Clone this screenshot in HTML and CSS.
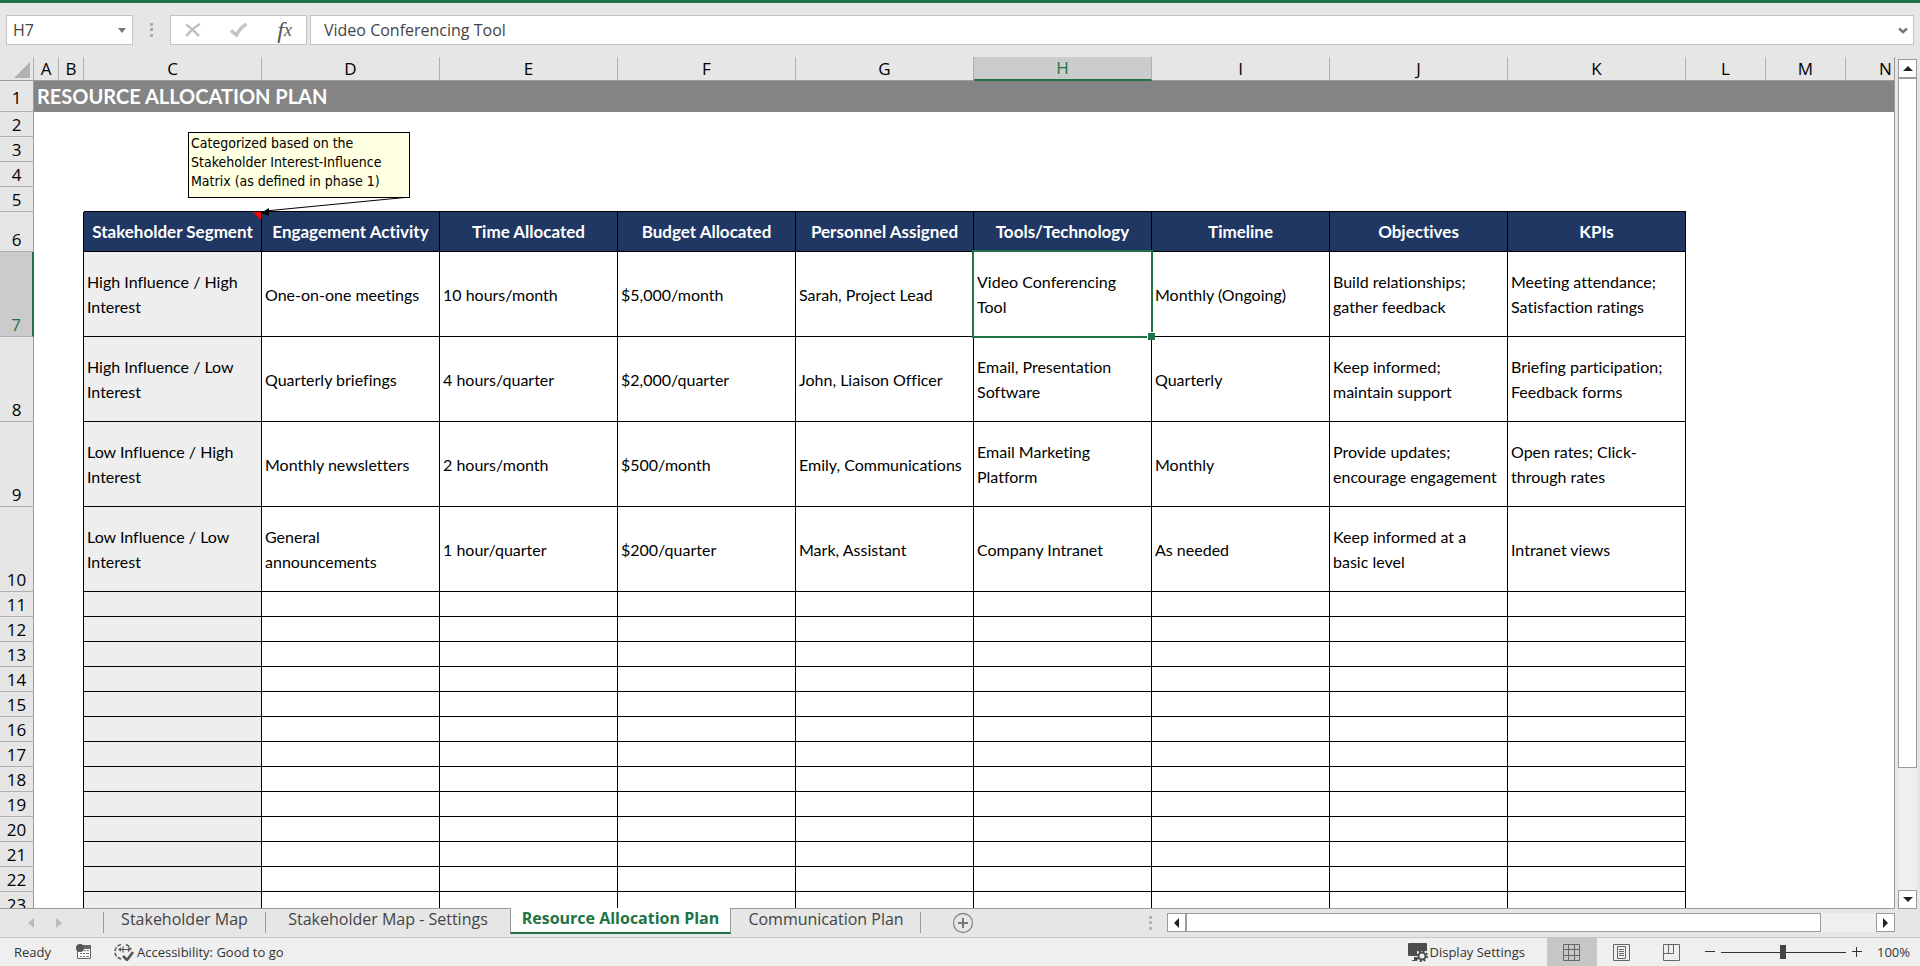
FILE: index.html
```html
<!DOCTYPE html>
<html lang="en">
<head>
<meta charset="utf-8">
<title>Resource Allocation Plan</title>
<link rel="stylesheet" href="styles.css">
</head>
<body>
<div class="app">
  <header class="formula-bar">
    <div class="name-box">
      <input class="name-input" type="text" value="H7" aria-label="Name box">
      <button class="plain" type="button" aria-label="Open name list"><svg width="8" height="5" viewBox="0 0 8 5"><path d="M0 0h8L4 5z" fill="#777"/></svg></button>
    </div>
    <svg class="grip" width="3" height="14" viewBox="0 0 3 14"><path d="M0 0h3v3H0zM0 5h3v3H0zM0 11h3v3H0z" fill="#aaa"/></svg>
    <div class="formula-tools">
      <button class="plain" type="button" aria-label="Cancel"><svg width="16" height="14" viewBox="0 0 16 14"><path d="M1 1.500C5 4 10 9 14 13M15 1C10 4 5 8 1.500 13" fill="none" stroke="#c0c0c0" stroke-width="2.500"/></svg></button>
      <button class="plain" type="button" aria-label="Enter"><svg width="18" height="14" viewBox="0 0 18 14"><path d="M1 7.500l5.500 4.500Q10 5 16.500 1" fill="none" stroke="#c4c4c4" stroke-width="3.500"/></svg></button>
      <button class="plain fx" type="button" aria-label="Insert function"><i>f</i><i class="fx-x">x</i></button>
    </div>
    <div class="formula-field">
      <input class="formula-input" type="text" value="Video Conferencing Tool" aria-label="Formula">
      <button class="plain" type="button" aria-label="Expand formula bar"><svg width="10" height="7" viewBox="0 0 10 7"><path d="M1 1.500l4 3.500 4-3.500" fill="none" stroke="#777" stroke-width="2.500"/></svg></button>
    </div>
  </header>

  <main class="workspace">
    <div class="sheet">
      <table class="grid">
        <colgroup><col class="w-head"><col class="w-narrow"><col class="w-narrow"><col class="w-data"><col class="w-data"><col class="w-data"><col class="w-data"><col class="w-data"><col class="w-data"><col class="w-data"><col class="w-data"><col class="w-data"><col class="w-default"><col class="w-default"><col></colgroup>
        <thead>
          <tr class="letters"><th class="corner"><svg width="16" height="16" viewBox="0 0 16 16"><path d="M16 0v16H0z" fill="#b2b2b2"/></svg></th><th>A</th><th>B</th><th>C</th><th>D</th><th>E</th><th>F</th><th>G</th><th class="on">H</th><th>I</th><th>J</th><th>K</th><th>L</th><th>M</th><th>N</th></tr>
        </thead>
        <tbody>
          <tr class="title-row"><th class="num">1</th><td class="title" colspan="14">RESOURCE ALLOCATION PLAN</td></tr>
          <tr><th class="num">2</th><td colspan="14"></td></tr>
          <tr><th class="num">3</th><td colspan="14"></td></tr>
          <tr><th class="num">4</th><td colspan="14"></td></tr>
          <tr class="above"><th class="num">5</th><td></td><td></td><td class="c"></td><td class="c"></td><td class="c"></td><td class="c"></td><td class="c"></td><td class="c"></td><td class="c"></td><td class="c"></td><td class="c"></td><td colspan="3"></td></tr>
          <tr class="heads"><th class="num">6</th><td></td><td class="edge"></td>
            <th class="h noted">Stakeholder Segment
              <svg class="note-line" width="160" height="30" viewBox="0 0 160 30"><path d="M152 0L7 14" stroke="#000" fill="none"/><path d="M3 16l8-5v8z"/></svg>
              <span class="note">Categorized based on the<br>Stakeholder Interest-Influence<br>Matrix (as defined in phase 1)</span>
            </th><th class="h">Engagement Activity</th><th class="h">Time Allocated</th><th class="h">Budget Allocated</th><th class="h">Personnel Assigned</th><th class="h">Tools/Technology</th><th class="h">Timeline</th><th class="h">Objectives</th><th class="h">KPIs</th><td colspan="3"></td></tr>
          <tr class="tall"><th class="num on">7</th><td></td><td class="edge"></td><td class="d seg">High Influence / High Interest</td><td class="d">One-on-one meetings</td><td class="d">10 hours/month</td><td class="d">$5,000/month</td><td class="d">Sarah, Project Lead</td><td class="d active">Video Conferencing Tool<span class="cursor"></span></td><td class="d">Monthly (Ongoing)</td><td class="d">Build relationships; gather feedback</td><td class="d">Meeting attendance; Satisfaction ratings</td><td colspan="3"></td></tr>
          <tr class="tall"><th class="num">8</th><td></td><td class="edge"></td><td class="d seg">High Influence / Low Interest</td><td class="d">Quarterly briefings</td><td class="d">4 hours/quarter</td><td class="d">$2,000/quarter</td><td class="d">John, Liaison Officer</td><td class="d">Email, Presentation Software</td><td class="d">Quarterly</td><td class="d">Keep informed; maintain support</td><td class="d">Briefing participation; Feedback forms</td><td colspan="3"></td></tr>
          <tr class="tall"><th class="num">9</th><td></td><td class="edge"></td><td class="d seg">Low Influence / High Interest</td><td class="d">Monthly newsletters</td><td class="d">2 hours/month</td><td class="d">$500/month</td><td class="d">Emily, Communications</td><td class="d">Email Marketing Platform</td><td class="d">Monthly</td><td class="d">Provide updates; encourage engagement</td><td class="d">Open rates; Click-through rates</td><td colspan="3"></td></tr>
          <tr class="tall"><th class="num">10</th><td></td><td class="edge"></td><td class="d seg">Low Influence / Low Interest</td><td class="d">General announcements</td><td class="d">1 hour/quarter</td><td class="d">$200/quarter</td><td class="d">Mark, Assistant</td><td class="d">Company Intranet</td><td class="d">As needed</td><td class="d">Keep informed at a basic level</td><td class="d">Intranet views</td><td colspan="3"></td></tr>
          <tr><th class="num">11</th><td></td><td class="edge"></td><td class="d seg"></td><td class="d"></td><td class="d"></td><td class="d"></td><td class="d"></td><td class="d"></td><td class="d"></td><td class="d"></td><td class="d"></td><td colspan="3"></td></tr>
          <tr><th class="num">12</th><td></td><td class="edge"></td><td class="d seg"></td><td class="d"></td><td class="d"></td><td class="d"></td><td class="d"></td><td class="d"></td><td class="d"></td><td class="d"></td><td class="d"></td><td colspan="3"></td></tr>
          <tr><th class="num">13</th><td></td><td class="edge"></td><td class="d seg"></td><td class="d"></td><td class="d"></td><td class="d"></td><td class="d"></td><td class="d"></td><td class="d"></td><td class="d"></td><td class="d"></td><td colspan="3"></td></tr>
          <tr><th class="num">14</th><td></td><td class="edge"></td><td class="d seg"></td><td class="d"></td><td class="d"></td><td class="d"></td><td class="d"></td><td class="d"></td><td class="d"></td><td class="d"></td><td class="d"></td><td colspan="3"></td></tr>
          <tr><th class="num">15</th><td></td><td class="edge"></td><td class="d seg"></td><td class="d"></td><td class="d"></td><td class="d"></td><td class="d"></td><td class="d"></td><td class="d"></td><td class="d"></td><td class="d"></td><td colspan="3"></td></tr>
          <tr><th class="num">16</th><td></td><td class="edge"></td><td class="d seg"></td><td class="d"></td><td class="d"></td><td class="d"></td><td class="d"></td><td class="d"></td><td class="d"></td><td class="d"></td><td class="d"></td><td colspan="3"></td></tr>
          <tr><th class="num">17</th><td></td><td class="edge"></td><td class="d seg"></td><td class="d"></td><td class="d"></td><td class="d"></td><td class="d"></td><td class="d"></td><td class="d"></td><td class="d"></td><td class="d"></td><td colspan="3"></td></tr>
          <tr><th class="num">18</th><td></td><td class="edge"></td><td class="d seg"></td><td class="d"></td><td class="d"></td><td class="d"></td><td class="d"></td><td class="d"></td><td class="d"></td><td class="d"></td><td class="d"></td><td colspan="3"></td></tr>
          <tr><th class="num">19</th><td></td><td class="edge"></td><td class="d seg"></td><td class="d"></td><td class="d"></td><td class="d"></td><td class="d"></td><td class="d"></td><td class="d"></td><td class="d"></td><td class="d"></td><td colspan="3"></td></tr>
          <tr><th class="num">20</th><td></td><td class="edge"></td><td class="d seg"></td><td class="d"></td><td class="d"></td><td class="d"></td><td class="d"></td><td class="d"></td><td class="d"></td><td class="d"></td><td class="d"></td><td colspan="3"></td></tr>
          <tr><th class="num">21</th><td></td><td class="edge"></td><td class="d seg"></td><td class="d"></td><td class="d"></td><td class="d"></td><td class="d"></td><td class="d"></td><td class="d"></td><td class="d"></td><td class="d"></td><td colspan="3"></td></tr>
          <tr><th class="num">22</th><td></td><td class="edge"></td><td class="d seg"></td><td class="d"></td><td class="d"></td><td class="d"></td><td class="d"></td><td class="d"></td><td class="d"></td><td class="d"></td><td class="d"></td><td colspan="3"></td></tr>
          <tr><th class="num">23</th><td></td><td class="edge"></td><td class="d seg"></td><td class="d"></td><td class="d"></td><td class="d"></td><td class="d"></td><td class="d"></td><td class="d"></td><td class="d"></td><td class="d"></td><td colspan="3"></td></tr>
        </tbody>
      </table>
    </div>
    <div class="vscroll">
      <button class="scroll-btn" type="button" aria-label="Scroll up"><svg width="10" height="5" viewBox="0 0 10 5"><path d="M0 5h10L5 0z" fill="#222"/></svg></button>
      <div class="vtrack"><div class="vthumb"></div></div>
      <button class="scroll-btn" type="button" aria-label="Scroll down"><svg width="10" height="5" viewBox="0 0 10 5"><path d="M0 0h10L5 5z" fill="#222"/></svg></button>
    </div>
  </main>

  <nav class="tab-bar" aria-label="Sheets">
    <div class="tab-nav">
      <button class="plain" type="button" aria-label="Previous sheet"><svg width="6" height="10" viewBox="0 0 6 10"><path d="M6 0v10L0 5z" fill="#bbb"/></svg></button>
      <button class="plain" type="button" aria-label="Next sheet"><svg width="6" height="10" viewBox="0 0 6 10"><path d="M0 0v10l6-5z" fill="#bbb"/></svg></button>
    </div>
    <button class="tab first" type="button">Stakeholder Map</button>
    <button class="tab wide" type="button">Stakeholder Map - Settings</button>
    <button class="tab current" type="button">Resource Allocation Plan</button>
    <button class="tab last" type="button">Communication Plan</button>
    <button class="plain add" type="button" aria-label="New sheet"><svg width="22" height="22" viewBox="0 0 22 22"><circle cx="11" cy="11" r="9.500" fill="none" stroke="#8a8a8a" stroke-width="1.300"/><path d="M11 6v10M6 11h10" stroke="#777" stroke-width="2"/></svg></button>
    <svg class="grip push" width="3" height="14" viewBox="0 0 3 14"><path d="M0 0h3v3H0zM0 5h3v3H0zM0 11h3v3H0z" fill="#b4b4b4"/></svg>
    <div class="hscroll">
      <button class="scroll-btn" type="button" aria-label="Scroll left"><svg width="5" height="10" viewBox="0 0 5 10"><path d="M5 0v10L0 5z" fill="#222"/></svg></button>
      <div class="htrack"><div class="hthumb"></div></div>
      <button class="scroll-btn" type="button" aria-label="Scroll right"><svg width="5" height="10" viewBox="0 0 5 10"><path d="M0 0v10l5-5z" fill="#222"/></svg></button>
    </div>
  </nav>

  <footer class="status">
    <span class="ready">Ready</span>
    <button class="plain macro" type="button" aria-label="Record macro"><svg width="16" height="16" viewBox="0 0 16 16"><path d="M1.500 6v8.500h13V2H8" fill="#fff" stroke="#666"/><path d="M6 1h9v4H6z" fill="#666"/><circle cx="4" cy="4" r="4" fill="#555"/><path d="M4 9.500h2M7 9.500h2M10 9.500h3M4 12.500h2M7 12.500h2M10 12.500h3M8 6.500h2M11 6.500h2" stroke="#777"/></svg></button>
    <button class="plain access" type="button"><svg width="20" height="18" viewBox="0 0 20 18"><path d="M7 1.500C4 2 1 5 1 9s3 6 6 7M12 1.500c2 1 4 2 5 5" fill="none" stroke="#555" stroke-width="1.500" stroke-dasharray="4 1.500"/><path d="M5 6.500h11M9 3.500v6M7 5l-2 1.500 2 1.500M14 4.500l2 2-2 2" fill="none" stroke="#555" stroke-width="1.200"/><path d="M9 13l4 4 6-8" fill="none" stroke="#555" stroke-width="2.500"/></svg>Accessibility: Good to go</button>
    <button class="plain display" type="button"><svg width="20" height="19" viewBox="0 0 20 19"><path d="M1 0h17q1 0 1 1v7H9v5H1q-1 0-1-1V1q0-1 1-1zM6 14h3v4H4v-1h2z" fill="#4d4d4d"/><circle cx="14" cy="13" r="3.500" fill="none" stroke="#4d4d4d" stroke-width="2"/><circle cx="14" cy="13" r="5" fill="none" stroke="#4d4d4d" stroke-width="2" stroke-dasharray="2 1.930"/></svg>Display Settings</button>
    <div class="views">
      <button class="plain view on" type="button" aria-label="Normal view"><svg width="17" height="17" viewBox="0 0 17 17"><path d="M.5.5h16v16H.5zM5.500.5v16M11.500.5v16M.5 5.500h16M.5 11.500h16" fill="none" stroke="#666"/></svg></button>
      <button class="plain view" type="button" aria-label="Page layout"><svg width="17" height="17" viewBox="0 0 17 17"><path d="M.5.5h16v16H.5zM4.500 2.500h8v12h-8zM6 5.500h5M6 7.500h5M6 9.500h5M6 11.500h5" fill="none" stroke="#666"/></svg></button>
      <button class="plain view" type="button" aria-label="Page break preview"><svg width="17" height="17" viewBox="0 0 17 17"><path d="M.5.5h16v16H.5zM.5 9.500h10v-9M5.500.5v9" fill="none" stroke="#666"/></svg></button>
    </div>
    <div class="zoom">
      <button class="plain" type="button" aria-label="Zoom out"><svg width="10" height="10" viewBox="0 0 10 10"><path d="M0 4.500h10" stroke="#333"/></svg></button>
      <input class="slider" type="range" min="0" max="100" value="50" aria-label="Zoom">
      <button class="plain" type="button" aria-label="Zoom in"><svg width="10" height="10" viewBox="0 0 10 10"><path d="M0 4.500h10M4.500 0v10" stroke="#333"/></svg></button>
      <span class="percent">100%</span>
    </div>
  </footer>
</div>
</body>
</html>
```

FILE: styles.css
```css
* { box-sizing: border-box; }
html, body { height: 100%; }
body {
  margin: 0;
  overflow: hidden;
  background: #e6e6e6;
  color: #000;
  font-family: "Open Sans", "Noto Sans", sans-serif;
  font-size: 16px;
}
svg { display: block; flex: none; }
button, input { font: inherit; color: inherit; }
.plain {
  display: flex;
  align-items: center;
  justify-content: center;
  padding: 0;
  border: 0;
  background: none;
}
.app {
  display: flex;
  flex-direction: column;
  height: 100vh;
  border-top: 3px solid #217346;
}

/* Formula bar */
.formula-bar {
  display: flex;
  flex: none;
  align-items: center;
  padding: 12px 6px 12px;
  color: #444;
}
.name-box, .formula-tools, .formula-field {
  display: flex;
  align-items: center;
  height: 30px;
  border: 1px solid #c3c3c3;
  background: #fff;
}
.name-box { width: 127px; padding: 0 6px; }
.name-input, .formula-input {
  flex: 1;
  min-width: 0;
  padding: 0;
  border: 0;
  outline: 0;
  background: none;
}
.formula-bar .grip { margin: 0 17px; }
.formula-tools { width: 137px; padding: 0 14px; justify-content: space-between; }
.formula-field { flex: 1; margin-left: 3px; padding: 0 5px 0 13px; }
.fx { font-family: "Liberation Serif", serif; font-size: 24px; line-height: 24px; color: #555; }
.fx-x { font-size: 18px; }

/* Worksheet */
.workspace { display: flex; flex: 1; min-height: 0; }
.sheet {
  flex: 1;
  min-width: 0;
  overflow: hidden;
  border-right: 1px solid #9b9b9b;
  border-bottom: 1px solid #9b9b9b;
  background: #fff;
}
.grid {
  width: 100%;
  min-width: 1926px;
  table-layout: fixed;
  border-collapse: separate;
  border-spacing: 0;
  font-family: Lato, "Open Sans", sans-serif;
  font-size: 16px;
  font-variant-ligatures: none;
  line-height: 25px;
}
.w-head { width: 34px; }
.w-narrow { width: 25px; }
.w-data { width: 178px; }
.w-default { width: 80px; }
.grid td, .grid th { padding: 0; }
.grid tbody tr { height: 25px; }
.grid tbody .title-row { height: 31px; }
.grid tbody .heads { height: 40px; }
.grid tbody .tall { height: 85px; }
.letters { height: 24px; }
.letters th {
  border-bottom: 1px solid #9b9b9b;
  border-right: 1px solid #b0b0b0;
  background: #e6e6e6;
  font: 400 17px/23px "Open Sans", "Noto Sans", sans-serif;
}
.letters .corner svg { margin: 2px 0 0 14px; }
.letters .on {
  border-bottom: 2px solid #217346;
  background: #cbcbcb;
  color: #217346;
  line-height: 22px;
}
.grid .num {
  border-right: 1px solid #9b9b9b;
  border-bottom: 1px solid #b0b0b0;
  background: #e6e6e6;
  font: 400 17px/22px "Open Sans", "Noto Sans", sans-serif;
  vertical-align: bottom;
}
.grid .title-row .num { line-height: 26px; }
.grid .num.on {
  border-right: 2px solid #217346;
  background: #cbcbcb;
  color: #217346;
}
.grid .title {
  padding-left: 3px;
  background: #848484;
  color: #fff;
  font-size: 20px;
  font-weight: 700;
  white-space: nowrap;
}
.grid .c { border-bottom: 1px solid #000; }
.grid .edge { border-right: 1px solid #000; }
.grid .h {
  border-right: 1px solid #000;
  border-bottom: 1px solid #000;
  background: #203764;
  color: #fff;
  font-size: 17px;
  font-weight: 700;
  text-align: center;
  white-space: nowrap;
}
.grid .d {
  padding: 0 6px 0 3px;
  border-right: 1px solid #000;
  border-bottom: 1px solid #000;
}
.grid .seg { background: #eee; }
.active { position: relative; }
.cursor {
  position: absolute;
  inset: -2px;
  border: 2px solid #217346;
}
.cursor::after {
  content: "";
  position: absolute;
  right: -4px;
  bottom: -4px;
  width: 7px;
  height: 7px;
  border: 1px solid #fff;
  border-right-width: 0;
  border-bottom-width: 0;
  background: #217346;
}
.noted { position: relative; }
.noted::after {
  content: "";
  position: absolute;
  top: 0;
  right: 0;
  border: 4px solid;
  border-color: #f00 #f00 transparent transparent;
}
.note {
  position: absolute;
  left: 104px;
  top: -80px;
  z-index: 2;
  width: 222px;
  height: 66px;
  padding: 1px 2px;
  border: 1px solid #000;
  background: #ffffe1;
  color: #000;
  font: 400 14px/19px "DejaVu Sans Condensed", "DejaVu Sans", sans-serif;
  text-align: left;
}
.note-line { position: absolute; left: 174px; top: -15px; z-index: 2; }

/* Scrollbars */
.scroll-btn {
  display: flex;
  flex: none;
  align-items: center;
  justify-content: center;
  width: 19px;
  height: 19px;
  padding: 0;
  border: 1px solid #9b9b9b;
  background: #fff;
}
.vscroll {
  display: flex;
  flex-direction: column;
  flex: none;
  margin: 2px 3px 0;
}
.vtrack { flex: 1; background: #efefef; }
.vthumb { height: 85%; border: 1px solid #9b9b9b; background: #fff; }
.hscroll {
  display: flex;
  width: 38.4%;
  height: 19px;
  margin-top: 4px;
}
.htrack { flex: 1; background: #efefef; }
.hthumb { width: 92%; height: 19px; border: 1px solid #9b9b9b; background: #fff; }

/* Sheet tabs */
.tab-bar {
  display: flex;
  flex: none;
  align-items: flex-start;
  height: 28px;
  padding-right: 25px;
  color: #444;
}
.tab-nav { display: flex; gap: 22px; padding: 9px 0 0 28px; width: 103px; }
.tab {
  position: relative;
  flex: none;
  height: 25px;
  padding: 0 0 4px;
  border: 0;
  background: none;
  line-height: 21px;
  white-space: nowrap;
}
.first { width: 163px; }
.wide { width: 244px; }
.last { width: 190px; }
.first::before, .first::after, .last::after {
  content: "";
  position: absolute;
  top: 3px;
  bottom: 1px;
  border-left: 1px solid #9b9b9b;
}
.first::before { left: 0; }
.first::after, .last::after { right: 0; }
.current {
  width: 221px;
  margin-top: -1px;
  height: 26px;
  border-left: 1px solid #9b9b9b;
  border-right: 1px solid #9b9b9b;
  border-bottom: 2px solid #217346;
  background: #fff;
  color: #217346;
  font-weight: 700;
}
.add { margin: 3px 0 0 31px; }
.push { margin: 7px 15px 0 auto; }

/* Status bar */
.status {
  display: flex;
  flex: none;
  align-items: center;
  height: 29px;
  border-top: 1px solid #c6c6c6;
  background: #efefef;
  color: #333;
  font-size: 13px;
  white-space: nowrap;
}
.ready { width: 76px; padding-left: 14px; }
.access { margin-left: 22px; gap: 3px; }
.display { gap: 1px; margin-left: auto; margin-right: 22px; }
.views { display: flex; align-self: stretch; }
.view { width: 50px; }
.view.on { background: #c6c6c6; }
.zoom { display: flex; align-items: center; padding: 0 10px 0 8px; }
.slider {
  appearance: none;
  width: 125px;
  height: 16px;
  margin: 0 6px;
  background: linear-gradient(#333, #333) center / 100% 1px no-repeat;
}
.slider::-webkit-slider-thumb {
  appearance: none;
  width: 6px;
  height: 14px;
  background: #444;
}
.percent { margin-left: 15px; }
```
